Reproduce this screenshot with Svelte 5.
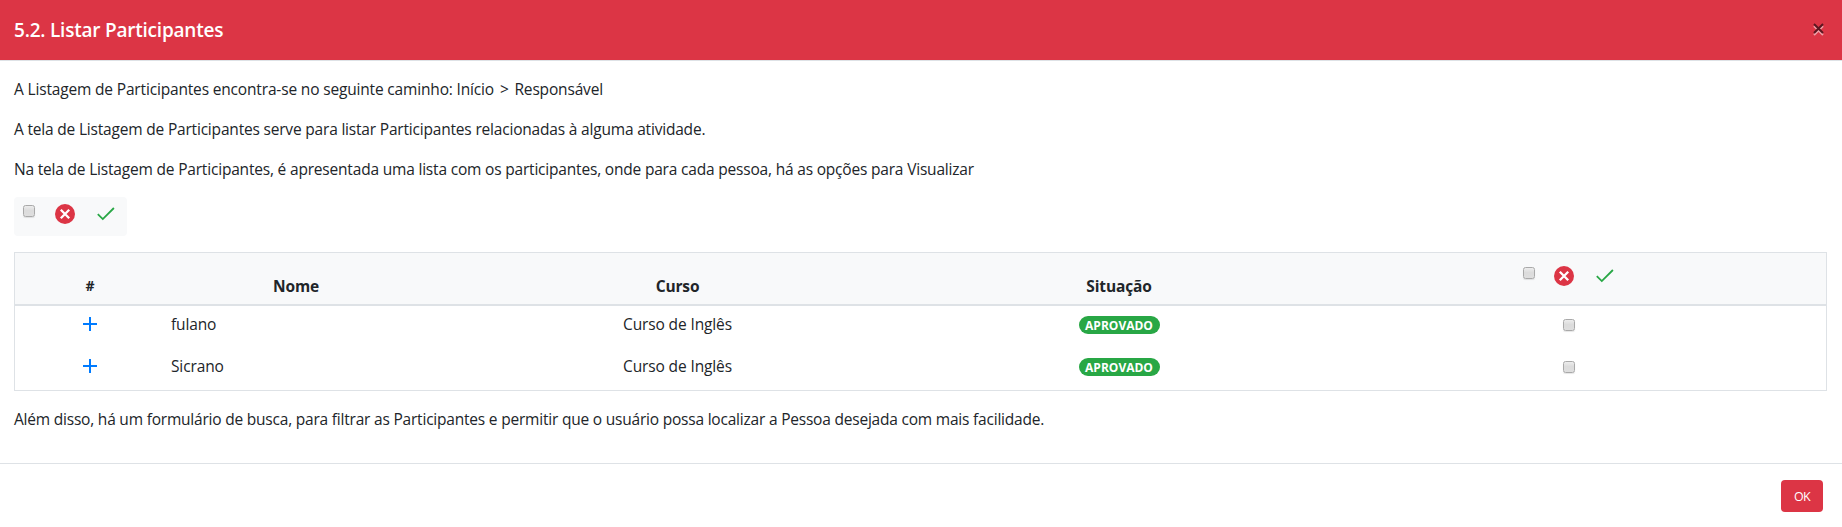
<script>
  const rows = [
    { nome: 'fulano', curso: 'Curso de Inglês', situacao: 'APROVADO' },
    { nome: 'Sicrano', curso: 'Curso de Inglês', situacao: 'APROVADO' }
  ];
</script>

{#snippet box()}
  <span class="box"></span>
{/snippet}

{#snippet actions()}
  {@render box()}
  <svg class="reject" width="20" height="20" viewBox="0 0 20 20">
    <circle cx="10" cy="10" r="10" fill="#dc3545" />
    <path d="M5.8 5.8 14.2 14.2M14.2 5.8 5.8 14.2" stroke="#fff" stroke-width="2.3" fill="none" />
  </svg>
  <svg class="accept" width="18" height="14" viewBox="0 0 18 14">
    <path d="M.8 7.2 5.8 12.1 16.9 1" stroke="#28a745" stroke-width="1.8" fill="none" />
  </svg>
{/snippet}

<div class="modal">
  <header>
    <h5>5.2. Listar Participantes</h5>
    <button class="close" aria-label="Fechar">
      <svg width="14" height="15" viewBox="0 0 14 15">
        <path d="M2 3 11 12M11 3 2 12" stroke="#f0a0a8" stroke-width="2" transform="translate(0 1)" />
        <path d="M2 2 11 11M11 2 2 11" stroke="#5c1720" stroke-width="2" />
      </svg>
    </button>
  </header>

  <main>
    <p class="p1">A Listagem de Participantes encontra-se no seguinte caminho: Início <span class="gt">&gt;</span> Responsável</p>
    <p class="p2">A tela de Listagem de Participantes serve para listar Participantes relacionadas à alguma atividade.</p>
    <p class="p3">Na tela de Listagem de Participantes, é apresentada uma lista com os participantes, onde para cada pessoa, há as opções para Visualizar</p>
    <div class="tools">{@render actions()}</div>

    <div class="table">
      <div class="row head">
        <div class="hash">#</div>
        <div>Nome</div>
        <div>Curso</div>
        <div>Situação</div>
        <div class="group">{@render actions()}</div>
      </div>
      {#each rows as r}
        <div class="row">
          <div>
            <svg width="14" height="14" viewBox="0 0 14 14"><path d="M0 7H14M7 0V14" stroke="#007bff" stroke-width="2" /></svg>
          </div>
          <div class="name">{r.nome}</div>
          <div class="course">{r.curso}</div>
          <div class="status"><span class="badge"><span>{r.situacao}</span></span></div>
          <div class="select">{@render box()}</div>
        </div>
      {/each}
    </div>

    <p class="p4">Além disso, há um formulário de busca, para filtrar as Participantes e permitir que o usuário possa localizar a Pessoa desejada com mais facilidade.</p>
  </main>

  <footer><button class="ok">OK</button></footer>
</div>

<style>
  :global(body) {
    margin: 0;
    background: #fff;
  }
  .modal {
    height: 527px;
    box-sizing: border-box;
    font: 16px/24px 'Open Sans', 'Noto Sans', sans-serif;
    color: #212529;
    white-space: nowrap;
  }
  header {
    height: 61px;
    box-sizing: border-box;
    padding: 0 16px 1px 14px;
    display: flex;
    align-items: center;
    justify-content: space-between;
    background: #dc3545;
    border-bottom: 1px solid #dee2e6;
  }
  h5 {
    margin: 0;
    padding-top: 1px;
    font-size: 19px;
    line-height: 30px;
    font-weight: 600;
    letter-spacing: -0.22px;
    color: #fff;
  }
  button {
    border: 0;
    font-family: inherit;
  }
  .close {
    padding: 0;
    background: none;
    display: flex;
  }
  main {
    height: 402px;
    box-sizing: border-box;
    padding: 16px 15px 0 14px;
  }
  p {
    margin: 0 0 16px;
    height: 24px;
    font-size: 15.5px;
    letter-spacing: -0.19px;
  }
  .p1 {
    letter-spacing: -0.165px;
  }
  .p4 {
    letter-spacing: -0.207px;
  }
  .gt {
    margin: 0 2px;
  }
  .tools {
    width: 113px;
    height: 39px;
    box-sizing: border-box;
    padding: 7px 9px;
    margin-bottom: 16px;
    display: flex;
    align-items: flex-start;
    background: #f8f9fa;
    border-radius: 4px;
  }
  .box {
    width: 12px;
    height: 12px;
    box-sizing: border-box;
    border: 1px solid #a9a9a9;
    border-radius: 2.5px;
    background: linear-gradient(#ececec, #dcdcdc 45%, #dedede);
    box-shadow: 0 1px 1px rgba(0, 0, 0, 0.1);
    margin-top: 1px;
  }
  .reject {
    margin-left: 19px;
  }
  .tools .reject {
    margin-left: 20px;
  }
  .accept {
    margin: 3px 0 0 22px;
  }
  .table {
    height: 139px;
    box-sizing: border-box;
    margin-bottom: 16px;
    border: 1px solid #dee2e6;
  }
  .row {
    display: grid;
    grid-template-columns: 150px 262px 501px 382px 1fr;
    height: 42px;
  }
  .row > div {
    display: flex;
    justify-content: center;
    align-items: center;
    height: 36px;
  }
  .row .status {
    height: 38px;
  }
  .row .select {
    padding-left: 2px;
  }
  .head {
    height: 53px;
    box-sizing: border-box;
    border-bottom: 2px solid #dee2e6;
    background: #f8f9fa;
    font-size: 15.5px;
    font-weight: 700;
    letter-spacing: -0.15px;
  }
  .head > div {
    height: 24px;
    margin-top: 21px;
  }
  .head .hash {
    font-size: 14px;
  }
  .head .group {
    margin-top: 13px;
    align-items: flex-start;
  }
  .row .name {
    justify-content: flex-start;
    padding-left: 6px;
  }
  .name,
  .course {
    font-size: 15.5px;
    letter-spacing: -0.13px;
  }
  .badge {
    width: 81px;
    height: 18px;
    display: flex;
    align-items: center;
    justify-content: center;
    border-radius: 9px;
    background: #28a745;
    color: #fff;
    font-size: 12px;
    font-weight: 700;
  }
  .badge span {
    padding-top: 1px;
  }
  footer {
    height: 64px;
    box-sizing: border-box;
    border-top: 1px solid #dee2e6;
    padding: 16px 19px 0 0;
    display: flex;
    justify-content: flex-end;
  }
  .ok {
    width: 42px;
    height: 32px;
    padding: 0;
    border-radius: 4px;
    background: #dc3545;
    color: #fff;
    font-size: 12.5px;
    letter-spacing: -0.6px;
  }
</style>
